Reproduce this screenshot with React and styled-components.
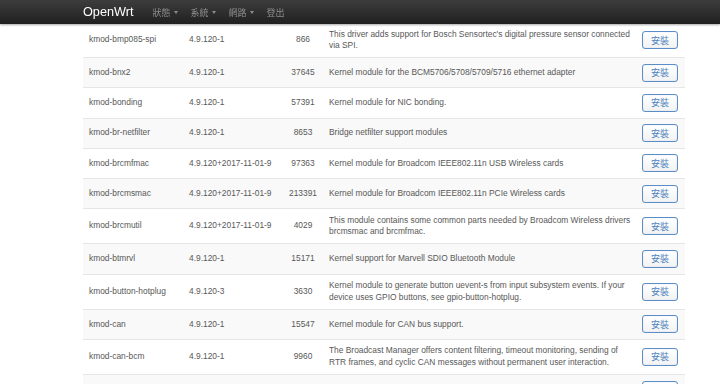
import React from "react";
import styled, { createGlobalStyle } from "styled-components";

const Global = createGlobalStyle`
  html, body { margin: 0; padding: 0; background: #fff; overflow: hidden; }
  body { font-family: "Liberation Sans", Arial, "Noto Sans CJK TC", sans-serif; }
`;

const NavBar = styled.header`
  position: fixed;
  top: 0;
  left: 0;
  right: 0;
  height: 24px;
  z-index: 10;
  background: linear-gradient(#3d3d3d, #202020);
  box-shadow: 0 1px 2px rgba(0, 0, 0, 0.35);
  display: flex;
  align-items: center;
  padding-left: 83px;
`;

const Brand = styled.a`
  color: #fff;
  font-size: 12.7px;
  font-family: "Liberation Sans", Arial, sans-serif;
  margin-right: 19px;
  text-decoration: none;
`;

const Menu = styled.nav`
  display: flex;
  align-items: center;
  gap: 13px;
`;

const MenuItem = styled.span`
  display: flex;
  align-items: center;
  gap: 3px;
  color: #8c8c8c;
  font-size: 9px;
  font-family: "Noto Sans CJK TC", sans-serif;
  line-height: 1;
`;

const Caret = styled.span`
  width: 0;
  height: 0;
  border-left: 2.5px solid transparent;
  border-right: 2.5px solid transparent;
  border-top: 3px solid #8c8c8c;
`;

const Page = styled.main`
  padding: 22px 0 0 83px;
`;

const Table = styled.table`
  width: 602px;
  border-collapse: collapse;
  table-layout: fixed;
  font-size: 8.4px;
  line-height: 11.5px;
  color: #585858;
`;

const Row = styled.tr`
  &:nth-child(even) { background: #f9f9f9; }
`;

const Cell = styled.td`
  border-top: 1px solid #e6e6e6;
  padding: 5.6px 6px;
  vertical-align: middle;
  text-align: ${(p) => p.$align || "left"};
  white-space: ${(p) => (p.$wrap ? "normal" : "nowrap")};
  ${(p) => (p.$pad ? `padding-left: ${p.$pad}px; padding-right: ${p.$pad}px;` : "")}
  ${(p) => (p.$wrap ? "padding-right: 2px;" : "")}
`;

const InstallButton = styled.button`
  width: 36px;
  height: 18px;
  padding: 0;
  border: 1px solid #5b8ec6;
  border-radius: 3px;
  background: linear-gradient(#ffffff, #f2f2f2);
  box-shadow: inset 0 0 1px rgba(91, 142, 198, 0.4);
  color: #4f83bf;
  font-size: 9px;
  font-family: "Noto Sans CJK TC", sans-serif;
  display: block;
`;

const packages = [
  ["kmod-bmp085-spi", "4.9.120-1", "866", "This driver adds support for Bosch Sensortec's digital pressure sensor connected via SPI."],
  ["kmod-bnx2", "4.9.120-1", "37645", "Kernel module for the BCM5706/5708/5709/5716 ethernet adapter"],
  ["kmod-bonding", "4.9.120-1", "57391", "Kernel module for NIC bonding."],
  ["kmod-br-netfilter", "4.9.120-1", "8653", "Bridge netfilter support modules"],
  ["kmod-brcmfmac", "4.9.120+2017-11-01-9", "97363", "Kernel module for Broadcom IEEE802.11n USB Wireless cards"],
  ["kmod-brcmsmac", "4.9.120+2017-11-01-9", "213391", "Kernel module for Broadcom IEEE802.11n PCIe Wireless cards"],
  ["kmod-brcmutil", "4.9.120+2017-11-01-9", "4029", "This module contains some common parts needed by Broadcom Wireless drivers brcmsmac and brcmfmac."],
  ["kmod-btmrvl", "4.9.120-1", "15171", "Kernel support for Marvell SDIO Bluetooth Module"],
  ["kmod-button-hotplug", "4.9.120-3", "3630", "Kernel module to generate button uevent-s from input subsystem events. If your device uses GPIO buttons, see gpio-button-hotplug."],
  ["kmod-can", "4.9.120-1", "15547", "Kernel module for CAN bus support."],
  ["kmod-can-bcm", "4.9.120-1", "9960", "The Broadcast Manager offers content filtering, timeout monitoring, sending of RTR frames, and cyclic CAN messages without permanent user interaction."],
  ["kmod-can-c-can", "4.9.120-1", "6310", "This driver adds support for the C_CAN/D_CAN chips."],
];

const menu = [
  { label: "狀態", caret: true },
  { label: "系統", caret: true },
  { label: "網路", caret: true },
  { label: "登出", caret: false },
];

export default function App() {
  return (
    <>
      <Global />
      <NavBar>
        <Brand>OpenWrt</Brand>
        <Menu>
          {menu.map((m) => (
            <MenuItem key={m.label}>
              {m.label}
              {m.caret && <Caret />}
            </MenuItem>
          ))}
        </Menu>
      </NavBar>
      <Page>
        <Table>
          <colgroup>
            <col style={{ width: 100 }} />
            <col style={{ width: 100 }} />
            <col style={{ width: 40 }} />
            <col style={{ width: 313 }} />
            <col style={{ width: 49 }} />
          </colgroup>
          <tbody>
            {packages.map(([name, ver, size, desc]) => (
              <Row key={name}>
                <Cell>{name}</Cell>
                <Cell>{ver}</Cell>
                <Cell $align="center" $pad={2}>{size}</Cell>
                <Cell $wrap>{desc}</Cell>
                <Cell>
                  <InstallButton>安裝</InstallButton>
                </Cell>
              </Row>
            ))}
          </tbody>
        </Table>
      </Page>
    </>
  );
}
